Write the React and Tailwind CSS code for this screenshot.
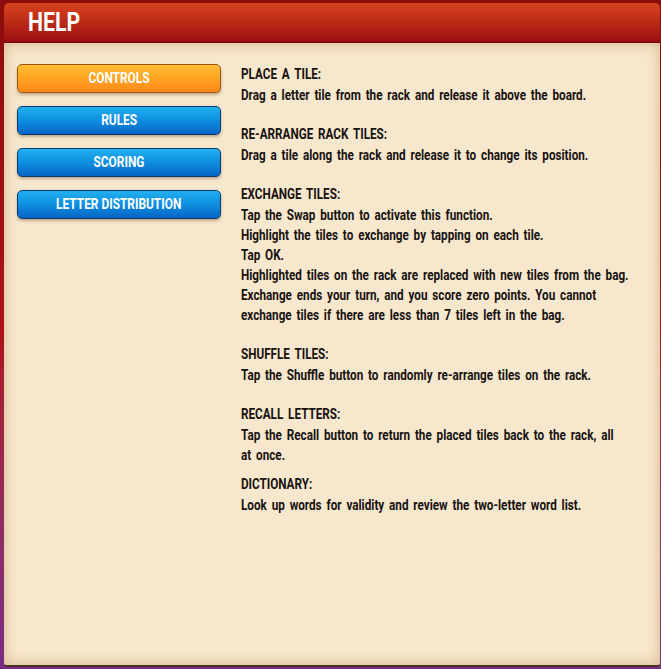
import React from 'react';

const font = { fontFamily: 'Roboto, "Liberation Sans", sans-serif' };

const menu = [
    { label: 'CONTROLS', active: true },
    { label: 'RULES' },
    { label: 'SCORING' },
    { label: 'LETTER DISTRIBUTION' },
];

const sections = [
    { title: 'PLACE A TILE:', lines: ['Drag a letter tile from the rack and release it above the board.'] },
    { title: 'RE-ARRANGE RACK TILES:', lines: ['Drag a tile along the rack and release it to change its position.'] },
    {
        title: 'EXCHANGE TILES:',
        lines: [
            'Tap the Swap button to activate this function.',
            'Highlight the tiles to exchange by tapping on each tile.',
            'Tap OK.',
            'Highlighted tiles on the rack are replaced with new tiles from the bag.',
            'Exchange ends your turn, and you score zero points. You cannot',
            'exchange tiles if there are less than 7 tiles left in the bag.',
        ],
    },
    { title: 'SHUFFLE TILES:', lines: ['Tap the Shuffle button to randomly re-arrange tiles on the rack.'] },
    {
        title: 'RECALL LETTERS:',
        lines: ['Tap the Recall button to return the placed tiles back to the rack, all', 'at once.'],
        tight: true,
    },
    { title: 'DICTIONARY:', lines: ['Look up words for validity and review the two-letter word list.'] },
];

function MenuButton({ label, active }) {
    const tone = active
        ? 'border-[#9a5410] bg-gradient-to-b from-[#ffbe30] via-[#ffa424] to-[#ff8818]'
        : 'border-[#0b3b6e] bg-gradient-to-b from-[#22b0f0] via-[#0f8ee0] to-[#0866c4]';
    return (
        <div
            className={`flex h-[29px] w-[204px] items-center justify-center rounded-[5px] border text-white shadow-[0_2px_3px_rgba(90,60,20,0.35)] ${tone}`}
        >
            <span className="scale-x-[0.85] whitespace-nowrap text-[14px] font-bold">{label}</span>
        </div>
    );
}

export default function App() {
    return (
        <div
            className="h-[669px] w-[661px] overflow-hidden bg-gradient-to-b from-[#8c0c0c] via-[#b0101c] to-[#7a2a8a] pl-[4px] pr-[1px] pt-[3px]"
            style={font}
        >
            <div className="flex h-[664px] w-[656px] flex-col">
                <div className="flex h-[40px] items-center rounded-t-[5px] border-b border-[#6e0608] bg-gradient-to-b from-[#d8421e] to-[#9c0a10] pl-[24px]">
                    <span className="origin-left scale-x-[0.85] text-[25px] font-bold leading-none text-white">HELP</span>
                </div>
                <div className="flex flex-1 gap-[20px] overflow-hidden rounded-b-[3px] border-b-2 border-[#4a3220] bg-[#f7e7cd] pl-[13px] pt-[21px] shadow-[inset_0_0_14px_rgba(190,140,80,0.55)]">
                    <div className="flex shrink-0 flex-col gap-[13px]">
                        {menu.map((m) => (
                            <MenuButton key={m.label} {...m} />
                        ))}
                    </div>
                    <div className="flex w-[390px] shrink-0 origin-top-left scale-x-[0.78] flex-col text-[15px] font-bold leading-[20px] text-[#161210] [word-spacing:2.5px]">
                        {sections.map((s, i) => (
                            <div key={s.title} className={i === sections.length - 1 ? '' : s.tight ? 'mb-[9px]' : 'mb-[19px]'}>
                                <div className="mb-[1px]">{s.title}</div>
                                {s.lines.map((l) => (
                                    <div key={l} className="whitespace-nowrap">{l}</div>
                                ))}
                            </div>
                        ))}
                    </div>
                </div>
            </div>
        </div>
    );
}
